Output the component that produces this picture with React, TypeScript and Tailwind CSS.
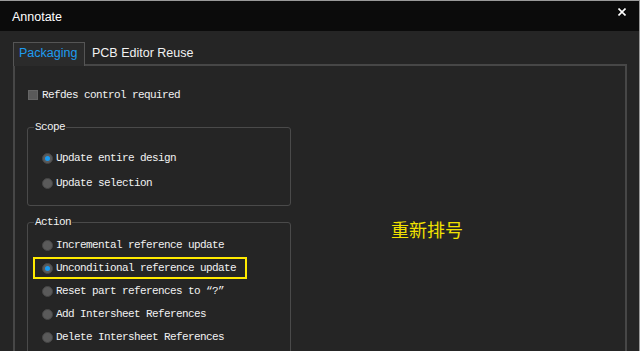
import React from 'react';

const mono = "font-['Liberation_Mono',monospace] text-[11px] leading-[16px] tracking-[-0.6px] text-[#f2f2f2] whitespace-pre";

interface RadioProps {
  label: string;
  checked?: boolean;
  highlight?: boolean;
}

function Radio({ label, checked, highlight }: RadioProps) {
  return (
    <div
      className={`flex items-center h-[22px] w-[214px] ml-[5px] pl-[7px] border-2 ${
        highlight ? 'border-[#ffea00]' : 'border-transparent'
      }`}
    >
      <span className="w-[11px] h-[11px] rounded-full bg-[#5a5a5a] border border-[#464646] flex items-center justify-center shrink-0">
        {checked && <span className="w-[5px] h-[5px] rounded-full bg-[#1a9cf2]" />}
      </span>
      <span className={`ml-[3px] ${mono}`}>{label}</span>
    </div>
  );
}

function Group({ title, children, className }: { title: string; children: React.ReactNode; className?: string }) {
  return (
    <fieldset className={`border border-[#4a4a4a] rounded-[3px] ${className ?? ''}`}>
      <legend className={`ml-[6px] px-[1px] leading-[14px] ${mono}`}>{title}</legend>
      {children}
    </fieldset>
  );
}

export default function App() {
  return (
    <div className="w-[640px] h-[351px] overflow-hidden bg-[#252525] border-t border-r border-[#9a9a9a] flex flex-col">
      {/* Title bar */}
      <div className="h-[30px] shrink-0 bg-[#0b0b0b] flex justify-between pl-[12px] pr-[13px]">
        <span className="pt-[8px] text-[12.5px] leading-[16px] text-white font-['Liberation_Sans',sans-serif]">
          Annotate
        </span>
        <svg className="mt-[7px]" width="8" height="8" viewBox="0 0 8 8">
          <path d="M0.5 0.5 L7.5 7.5 M7.5 0.5 L0.5 7.5" stroke="#ffffff" strokeWidth="1.6" />
        </svg>
      </div>

      {/* Body */}
      <div className="pt-[11px] pl-[13px] pr-[12px] font-['Liberation_Sans',sans-serif]">
        {/* Tabs */}
        <div className="flex items-end h-[22px]">
          <div className="relative z-10 w-[72px] h-[24px] -mb-[2px] pl-[5px] pb-[2px] border border-b-0 border-[#555555] bg-[#2b2b2b] flex items-center text-[12.5px] text-[#1e9cf0]">
            Packaging
          </div>
          <div className="ml-[7px] h-[22px] flex items-center text-[12.5px] text-[#f2f2f2]">PCB Editor Reuse</div>
        </div>

        {/* Tab pane */}
        <div className="h-[300px] border-2 border-b-0 border-[#474747] pl-[12px] flex">
          <div className="w-[264px] shrink-0 flex flex-col">
            <div className="mt-[21px] h-[16px] flex items-center">
              <span className="ml-[1px] w-[10px] h-[10px] bg-[#5a5a5a] border border-[#666666]" />
              <span className={`ml-[4px] ${mono}`}>Refdes control required</span>
            </div>

            <Group title="Scope" className="mt-[16px] pb-[11px]">
              <div className="mt-[12px] flex flex-col gap-[3px]">
                <Radio label="Update entire design" checked />
                <Radio label="Update selection" />
              </div>
            </Group>

            <Group title="Action" className="mt-[8px] pb-[11px]">
              <div className="mt-[4px] flex flex-col gap-[1px]">
                <Radio label="Incremental reference update" />
                <Radio label="Unconditional reference update" checked highlight />
                <Radio label={'Reset part references to \u201c?\u201d'} />
                <Radio label="Add Intersheet References" />
                <Radio label="Delete Intersheet References" />
              </div>
            </Group>
          </div>

          <div className="pl-[100px] pt-[151px]">
            <span className="text-[18px] leading-[24px] text-[#f2e200] font-['Noto_Sans_CJK_SC',sans-serif]">
              重新排号
            </span>
          </div>
        </div>
      </div>
    </div>
  );
}
